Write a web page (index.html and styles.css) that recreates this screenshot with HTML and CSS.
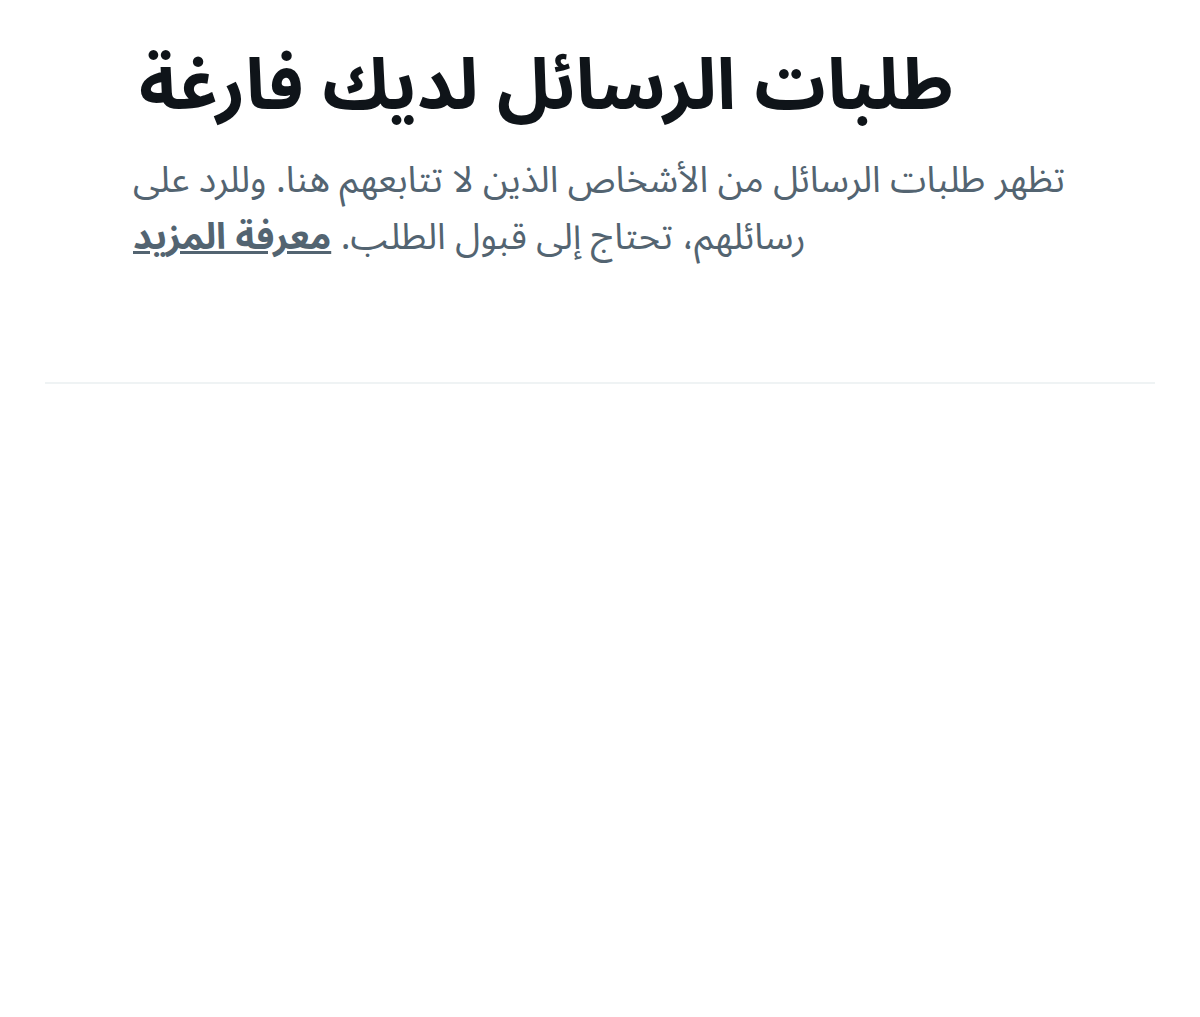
FILE: index.html
```html
<!DOCTYPE html>
<html lang="ar" dir="rtl">
<head>
<meta charset="utf-8">
<link rel="stylesheet" href="styles.css">
</head>
<body>
<main class="page">
  <section class="empty">
    <h1 class="title">طلبات الرسائل لديك فارغة</h1>
    <p class="text">تظهر طلبات الرسائل من الأشخاص الذين لا تتابعهم هنا. وللرد على رسائلهم، تحتاج إلى قبول الطلب. <a class="link" href="#">معرفة المزيد</a></p>
  </section>
  <div class="sep"></div>
</main>
</body>
</html>
```
FILE: styles.css
```css
html, body {
  margin: 0;
  padding: 0;
  background: #ffffff;
}
body {
  font-family: "Noto Sans Arabic", "DejaVu Sans", "Noto Sans", sans-serif;
  direction: rtl;
}
.page {
  width: 1200px;
  height: 1017px;
  display: flex;
  flex-direction: column;
}
.empty {
  margin: 0 132px 0 133px;
  padding-top: 30px;
  text-align: left;
  height: 382px;
  box-sizing: border-box;
}
.title {
  margin: 0 0 0 6px;
  font-size: 71px;
  line-height: 112px;
  font-weight: 700;
  color: #0f1419;
}
.text {
  margin: 10px 0 0 0;
  font-size: 36.6px;
  line-height: 57px;
  color: #536471;
}
.link {
  color: #536471;
  font-weight: 700;
  text-decoration: underline;
}
.sep {
  margin: 0 45px;
  height: 2px;
  background: #eff3f4;
}
```
